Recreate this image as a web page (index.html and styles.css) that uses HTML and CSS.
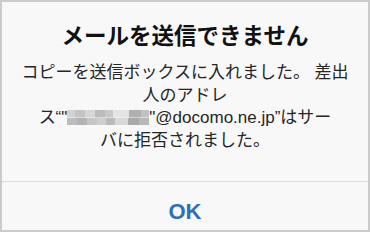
FILE: index.html
```html
<!DOCTYPE html>
<html lang="ja">
<head>
<meta charset="utf-8">
<link rel="stylesheet" href="styles.css">
</head>
<body>
<div class="alert">
  <div class="content">
    <div class="title">メールを送信できません</div>
    <div class="message">コピーを送信ボックスに入れました。 差出<br>人のアドレ<br>ス“"<span class="blur"></span>"@docomo.ne.jp”はサー<br>バに拒否されました。</div>
  </div>
  <div class="actions">
    <div class="ok">OK</div>
  </div>
</div>
</body>
</html>
```
FILE: styles.css
```css
html, body {
  margin: 0;
  padding: 0;
  background: #f8f8f8;
}
.alert {
  box-sizing: border-box;
  width: 370px;
  height: 232px;
  border: 2px solid #cbcbcb;
  background: #f8f8f8;
  display: flex;
  flex-direction: column;
  font-family: "Liberation Sans", "Noto Sans CJK JP", sans-serif;
  overflow: hidden;
}
.content {
  padding: 21px 8px 29px;
  text-align: center;
  border-bottom: 1px solid #dcdcdc;
}
.title {
  font-size: 22.5px;
  line-height: 28px;
  font-weight: bold;
  color: #111111;
}
.message {
  margin-top: 11px;
  font-size: 17px;
  line-height: 22.6px;
  color: #262626;
}
.blur {
  display: inline-block;
  width: 82px;
  height: 15px;
  vertical-align: -2px;
  background:
    linear-gradient(90deg, #d2d2d2 0 10%, #c4c4c4 10% 22%, #d6d6d6 22% 34%, #bcbcbc 34% 46%, #c8c8c8 46% 56%, #e4e4e4 56% 76%, #b0b0b0 76% 90%, #c2c2c2 90% 100%) top / 100% 50% no-repeat,
    linear-gradient(90deg, #bdbdbd 0 12%, #b4b4b4 12% 24%, #c6c6c6 24% 36%, #cfcfcf 36% 48%, #bababa 48% 58%, #d8d8d8 58% 74%, #a9a9a9 74% 88%, #b8b8b8 88% 100%) bottom / 100% 50% no-repeat;
}
.actions {
  flex: 1;
  padding-top: 19px;
  text-align: center;
}
.ok {
  font-size: 22px;
  line-height: 22px;
  font-weight: bold;
  color: #2a6fc1;
}
```
